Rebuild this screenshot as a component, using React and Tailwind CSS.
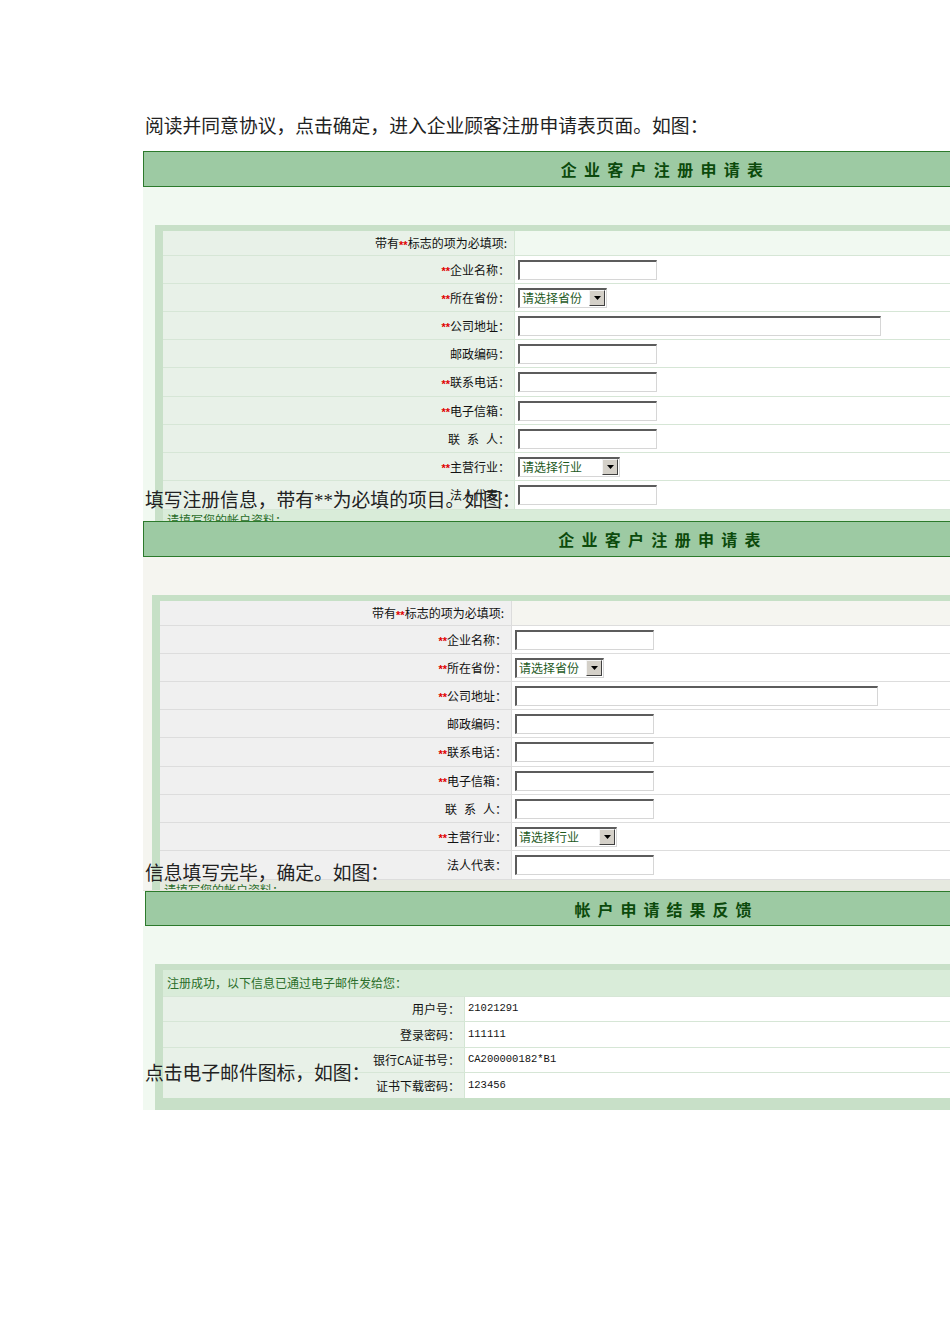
import React from "react";

const CJK = "font-['Noto_Sans_CJK_SC',sans-serif]";
const CAPTION =
  "absolute left-[2px] h-[20px] leading-[20px] text-[18.8px] text-[#222] whitespace-nowrap font-['Liberation_Serif','Noto_Sans_CJK_SC',serif]";

function TextBox({ w }) {
  return (
    <div
      className={`h-[20px] ${w} bg-white border-t-2 border-l-2 border-b border-r border-t-[#5c5c5c] border-l-[#5c5c5c] border-b-[#d6d6d6] border-r-[#d6d6d6]`}
    />
  );
}

function SelectBox({ label, w }) {
  return (
    <div
      className={`h-[20px] ${w} flex items-center bg-white border-t-2 border-l-2 border-b border-r border-t-[#5c5c5c] border-l-[#5c5c5c] border-b-[#d6d6d6] border-r-[#d6d6d6]`}
    >
      <span className="flex-1 pl-[2px] text-[12px] leading-none text-[#1e5a1e]">{label}</span>
      <span className="w-[16px] h-[16px] mr-[1px] bg-[#d4d0c8] border border-t-[#f4f4f4] border-l-[#f4f4f4] border-b-[#404040] border-r-[#404040] flex items-center justify-center">
        <svg width="7" height="4" viewBox="0 0 7 4">
          <path d="M0 0h7L3.5 4z" fill="#000" />
        </svg>
      </span>
    </div>
  );
}

function Req() {
  return (
    <span className="text-[#e00000] text-[11px] font-bold relative top-[2px] font-['Liberation_Sans',sans-serif]">
      **
    </span>
  );
}

const FORM_ROWS = [
  { req: true, label: "企业名称", kind: "text", h: "h-[28px]" },
  { req: true, label: "所在省份", kind: "select", sel: "请选择省份", w: "w-[89px]", h: "h-[28px]" },
  { req: true, label: "公司地址", kind: "long", h: "h-[28px]" },
  { req: false, label: "邮政编码", kind: "text", h: "h-[28px]" },
  { req: true, label: "联系电话", kind: "text", h: "h-[29px]" },
  { req: true, label: "电子信箱", kind: "text", h: "h-[28px]" },
  { req: false, label: "contact", kind: "text", h: "h-[28px]" },
  { req: true, label: "主营行业", kind: "select", sel: "请选择行业", w: "w-[102px]", h: "h-[28px]" },
  { req: false, label: "法人代表", kind: "text", h: "h-[29px]" },
];

function Header({ title, offset }) {
  return (
    <div className="h-[36px] border border-[#2c7a2c] bg-[#9dcaa3] flex items-center justify-center">
      <span className={`${offset} text-[16px] font-bold tracking-[7.3px] text-[#0c4a0c] ${CJK}`}>{title}</span>
    </div>
  );
}

function RegistrationForm({ p }) {
  return (
    <div className={`w-[1040px] ${CJK}`}>
      <Header title="企业客户注册申请表" offset={p.titleOffset} />
      <div className={`${p.area} pt-[38px] ${p.panelLeft}`}>
        <div className={`${p.band} pt-[6px] pl-[8px]`}>
          {/* required-field hint row */}
          <div className={`h-[25px] flex border-b ${p.rowBorder}`}>
            <div className={`w-[352px] ${p.label} border-r ${p.divider} flex items-center justify-end pr-[7px] text-[12px] text-[#111]`}>
              带有<Req />标志的项为必填项:
            </div>
            <div className={`flex-1 ${p.hintRight}`} />
          </div>
          {FORM_ROWS.map((r, i) => (
            <div key={i} className={`${r.h} flex border-b ${p.rowBorder}`}>
              <div className={`w-[352px] ${p.label} border-r ${p.divider} flex items-center justify-end pr-[4px] text-[12px] text-[#111]`}>
                {r.req && <Req />}
                {r.label === "contact" ? (
                  <span>
                    <span className="tracking-[7px]">联系</span>人：
                  </span>
                ) : (
                  <span>{r.label}：</span>
                )}
              </div>
              <div className="flex-1 bg-white flex items-center pl-[3px]">
                {r.kind === "text" && <TextBox w="w-[139px]" />}
                {r.kind === "long" && <TextBox w="w-[363px]" />}
                {r.kind === "select" && <SelectBox label={r.sel} w={r.w} />}
              </div>
            </div>
          ))}
          {/* next section title, cut off by the following panel */}
          <div className={`h-[26px] ${p.footer} pt-[2px] pl-[4px] text-[12px] leading-[16px] text-[#2a6e2a]`}>
            请填写您的帐户资料：
          </div>
        </div>
      </div>
    </div>
  );
}

const GREEN = {
  titleOffset: "pl-[5px]",
  area: "bg-[#f1f9f1]",
  panelLeft: "pl-[12px]",
  band: "bg-[#c8e0c8]",
  label: "bg-[#e8f1e8]",
  divider: "border-[#d4e6d4]",
  rowBorder: "border-[#d6e6d6]",
  hintRight: "bg-[#f1f9f1]",
  footer: "bg-[#d9ecd9]",
};

const GREY = {
  titleOffset: "pl-[0px]",
  area: "bg-[#f5f5f0]",
  panelLeft: "pl-[9px]",
  band: "bg-[#c6e0c6]",
  label: "bg-[#f0f0f0]",
  divider: "border-[#dcdcdc]",
  rowBorder: "border-[#dddddd]",
  hintRight: "bg-[#f5f5f0]",
  footer: "bg-[#e6e9e0]",
};

const RESULT_ROWS = [
  { label: "用户号", value: "21021291", h: "h-[25px]" },
  { label: "登录密码", value: "111111", h: "h-[26px]" },
  { label: "银行CA证书号", value: "CA200000182*B1", h: "h-[25px]" },
  { label: "证书下载密码", value: "123456", h: "h-[26px]" },
];

function ResultPanel() {
  return (
    <div className={`w-[1040px] ${CJK}`}>
      <div className="h-[1px] bg-[#e6e6de]" />
      <div className="ml-[2px]">
        <div className="h-[35px] border border-[#2c7a2c] bg-[#9dcaa3] flex items-center justify-center">
          <span className={`pl-[5px] text-[16px] font-bold tracking-[7px] text-[#0c4a0c] ${CJK}`}>帐户申请结果反馈</span>
        </div>
      </div>
      <div className="bg-[#f1f9f1] pt-[38px] pl-[12px]">
        <div className="bg-[#c8e0c8] pt-[6px] pl-[8px] pb-[12px]">
          <div className="h-[26px] bg-[#d9ecd9] flex items-center pl-[4px] text-[12px] text-[#2a6e2a]">
            注册成功，以下信息已通过电子邮件发给您：
          </div>
          {RESULT_ROWS.map((r, i) => (
            <div key={i} className={`${r.h} flex border-t border-[#d6e6d6]`}>
              <div className="w-[302px] bg-[#e8f1e8] border-r border-[#d4e6d4] flex items-center justify-end pr-[4px] text-[12px] text-[#111]">
                {r.label}：
              </div>
              <div className="flex-1 bg-white flex items-center pl-[3px] text-[10.5px] text-[#111] font-['Liberation_Mono',monospace]">
                {r.value}
              </div>
            </div>
          ))}
        </div>
      </div>
    </div>
  );
}

export default function App() {
  return (
    <div className="w-[950px] h-[1344px] bg-white overflow-hidden">
      <div className="pt-[117px] pl-[143px]">
        <p className="pl-[2px] h-[20px] leading-[20px] text-[18.8px] text-[#222] whitespace-nowrap font-['Liberation_Serif','Noto_Sans_CJK_SC',serif]">
          阅读并同意协议，点击确定，进入企业顾客注册申请表页面。如图：
        </p>

        <div className="mt-[14px] relative h-[370px] overflow-hidden">
          <RegistrationForm p={GREEN} />
          <p className={`${CAPTION} top-[340px]`}>填写注册信息，带有**为必填的项目。如图：</p>
        </div>

        <div className="relative h-[369px] overflow-hidden">
          <RegistrationForm p={GREY} />
          <p className={`${CAPTION} top-[343px]`}>信息填写完毕，确定。如图：</p>
        </div>

        <div className="relative h-[220px] overflow-hidden">
          <ResultPanel />
          <p className={`${CAPTION} top-[174px]`}>点击电子邮件图标，如图：</p>
        </div>
      </div>
    </div>
  );
}
